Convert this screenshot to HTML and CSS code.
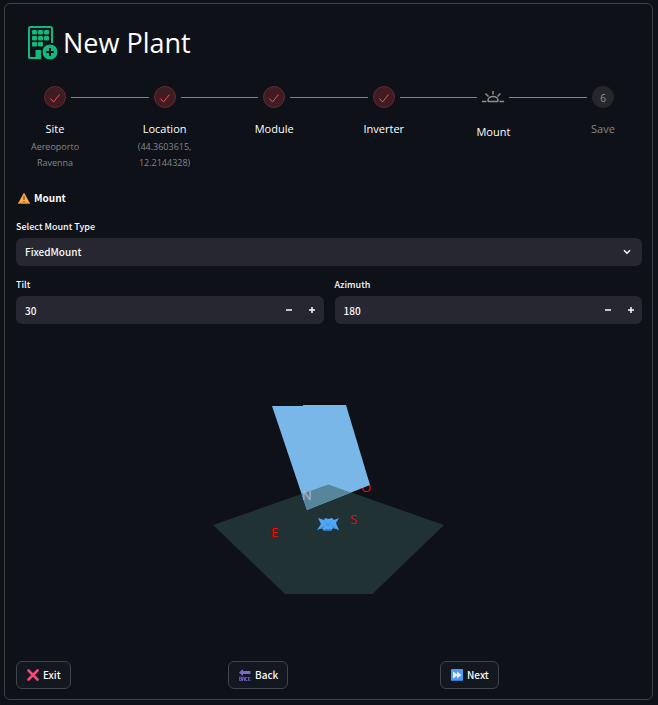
FILE: index.html
```html
<!DOCTYPE html>
<html lang="en">
<head>
<meta charset="utf-8">
<meta name="viewport" content="width=device-width, initial-scale=1">
<title>New Plant</title>
<link rel="stylesheet" href="styles.css">
</head>
<body>
<main class="card">
  <header class="heading">
    <svg class="heading-icon" viewBox="0 0 30 34" aria-hidden="true">
      <path d="M1 32V2.500Q1 1 2.500 1H22.500Q24 1 24 2.500V17M1 31Q1 32 2 32H12V25H8.500V32" fill="none" stroke="#10b981" stroke-width="2"/>
      <path d="M8 25h5v7H8z" fill="#10b981"/>
      <g fill="#10b981">
        <rect x="4" y="4" width="5" height="4.500" rx="1"/><rect x="10" y="4" width="5" height="4.500" rx="1"/><rect x="16" y="4" width="5" height="4.500" rx="1"/>
        <rect x="4" y="10" width="5" height="4.500" rx="1"/><rect x="10" y="10" width="5" height="4.500" rx="1"/><rect x="16" y="10" width="5" height="4.500" rx="1"/>
        <rect x="4" y="16" width="5" height="4.500" rx="1"/><rect x="10" y="16" width="5" height="4.500" rx="1"/>
      </g>
      <circle cx="22" cy="26" r="8" fill="#10b981" stroke="#0e1117"/>
      <path d="M18 26h8M22 22v8" stroke="#0e1117" stroke-width="2"/>
    </svg>
    <h1>New Plant</h1>
  </header>

  <ol class="steps">
    <li class="step done">
      <div class="step-body">
        <span class="marker"><svg viewBox="0 0 12 12" aria-hidden="true"><path d="M1.500 7.500 4.500 11 10.500 3.500"/></svg></span>
        <span class="step-title">Site</span>
        <span class="step-note">Aereoporto Ravenna</span>
      </div>
    </li>
    <li class="step done">
      <div class="step-body">
        <span class="marker"><svg viewBox="0 0 12 12" aria-hidden="true"><path d="M1.500 7.500 4.500 11 10.500 3.500"/></svg></span>
        <span class="step-title">Location</span>
        <span class="step-note">(44.3603615, 12.2144328)</span>
      </div>
    </li>
    <li class="step done">
      <div class="step-body">
        <span class="marker"><svg viewBox="0 0 12 12" aria-hidden="true"><path d="M1.500 7.500 4.500 11 10.500 3.500"/></svg></span>
        <span class="step-title">Module</span>
      </div>
    </li>
    <li class="step done">
      <div class="step-body">
        <span class="marker"><svg viewBox="0 0 12 12" aria-hidden="true"><path d="M1.500 7.500 4.500 11 10.500 3.500"/></svg></span>
        <span class="step-title">Inverter</span>
      </div>
    </li>
    <li class="step current" aria-current="step">
      <div class="step-body">
        <span class="marker"><svg viewBox="0 0 22 22" aria-hidden="true"><path d="M0 15.500H4.500M17.500 15.500H22M6 15.500H16M6 15.500V14.500A5 4 0 0 1 16 14.500V15.500M11 5V8.500M3.500 7.500 6.500 10.500M18.500 7.500 15.500 10.500"/></svg></span>
        <span class="step-title">Mount</span>
      </div>
    </li>
    <li class="step waiting">
      <div class="step-body">
        <span class="marker">6</span>
        <span class="step-title">Save</span>
      </div>
    </li>
  </ol>

  <h2 class="section-title">
    <svg class="warning" viewBox="0 0 12 12" aria-hidden="true"><path d="M6 .500 12 11.500H0z" fill="#fbab4b"/><path d="M0 11h12" stroke="#d98b3c"/><path d="M6 4v4M6 9v1" stroke="#4a3d35" stroke-width="1"/></svg>
    Mount
  </h2>

  <form class="form">
    <div class="field">
      <label for="mount-type">Select Mount Type</label>
      <div class="control">
        <select id="mount-type"><option>FixedMount</option></select>
        <svg class="chevron" viewBox="0 0 8 6" aria-hidden="true"><path d="M1 1.200 4 4.200 7 1.200"/></svg>
      </div>
    </div>
    <div class="pair">
      <div class="field">
        <label for="tilt">Tilt</label>
        <div class="control">
          <input id="tilt" type="text" inputmode="numeric" value="30">
          <button class="stepper" type="button" aria-label="Decrease tilt"><svg viewBox="0 0 6 6"><path d="M0 3h6"/></svg></button>
          <button class="stepper" type="button" aria-label="Increase tilt"><svg viewBox="0 0 6 6"><path d="M0 3h6M3 0v6"/></svg></button>
        </div>
      </div>
      <div class="field">
        <label for="azimuth">Azimuth</label>
        <div class="control">
          <input id="azimuth" type="text" inputmode="numeric" value="180">
          <button class="stepper" type="button" aria-label="Decrease azimuth"><svg viewBox="0 0 6 6"><path d="M0 3h6"/></svg></button>
          <button class="stepper" type="button" aria-label="Increase azimuth"><svg viewBox="0 0 6 6"><path d="M0 3h6M3 0v6"/></svg></button>
        </div>
      </div>
    </div>
  </form>

  <svg class="scene" viewBox="0 0 626 320" role="img" aria-label="Mount orientation">
    <path d="M197 195 312.500 154.500 428 195 356.500 264H269z" fill="#213235"/>
    <text class="compass" x="345" y="162">O</text>
    <path d="M256 76H287V75H330L354 155 291 180z" fill="#79b7e9"/>
    <path d="M285.500 164 312.500 154.500 334.500 162.500 291 180z" fill="#57869a"/>
    <text class="compass north" x="286" y="170">N</text>
    <text class="compass" x="255" y="207">E</text>
    <text class="compass" x="334" y="194">S</text>
    <path d="M302 188 308 190 309 188 312 189 316 188 318 190 323 188 320 193 323 200 317 198 315 201 312 199 308 201 306 198 301 200 305 194z" fill="#4fa8f7"/>
    <path d="M303 199 309 195 308 198zM322 199 315 195 317 198zM309 191l3 4 3-4-2 5h-2z" fill="#3f8fd2"/>
    <path d="M308 199h8l-2 2h-4z" fill="#42799f"/>
  </svg>

  <nav class="actions" aria-label="Steps">
    <button type="button"><svg viewBox="0 0 12 12" aria-hidden="true"><path d="M1.500 1.500 10.500 10.500M10.500 1.500 1.500 10.500" stroke="#f8487a" stroke-width="2.600" stroke-linecap="round"/></svg>Exit</button>
    <button type="button"><svg viewBox="0 0 12 12" aria-hidden="true"><path d="M0 3.500 4 0V2H11.500V5H4V7z" fill="#7c68c8"/><path d="M.500 8V11.500H2.500V8H.500M.500 9.700H2.500M3.500 12V8.500H5.500V12M3.500 10H5.500M8.500 8.500H6.500V11.500H8.500M9.500 8V12M11.500 8 9.500 10 11.500 12" fill="none" stroke="#6554a8"/></svg>Back</button>
    <button type="button"><svg viewBox="0 0 12 12" aria-hidden="true"><rect width="12" height="12" rx="1" fill="#4c9bf0"/><path d="M0 11h12v1H0z" fill="#3579c8"/><path d="M2 2.500 6 5.200V2.500L10.500 6 6 9.500V6.800L2 9.500z" fill="#f3efff"/></svg>Next</button>
  </nav>
</main>
</body>
</html>
```
FILE: styles.css
```css
* {
  box-sizing: border-box;
}

body {
  margin: 0;
  padding: 3px 5px 5px 4px;
  background: #0e1117;
  color: #fafafa;
  font: 10px/16px "Noto Sans CJK JP", "Noto Sans", sans-serif;
}

.card {
  border: 1px solid #3d3f45;
  border-radius: 6px;
  padding: 20px 10px 10px 11px;
}

.heading {
  display: flex;
  align-items: center;
  gap: 5px;
  height: 38px;
  padding-left: 12px;
}

.heading-icon {
  width: 30px;
  height: 34px;
}

h1 {
  margin: 0;
  color: #fff;
  font: 400 27px/38px "Open Sans", "Noto Sans", sans-serif;
}

.steps {
  display: grid;
  grid-template-columns: repeat(5, minmax(0, 1fr)) 78px;
  min-height: 88px;
  margin: 24px 0 0;
  padding: 0;
  list-style: none;
  font-family: "Open Sans", "Noto Sans", sans-serif;
}

.step {
  position: relative;
}

.step:not(:last-child)::after {
  content: "";
  position: absolute;
  top: 11px;
  left: 55px;
  width: calc(100% - 32px);
  height: 1px;
  background: #84858a;
}

.step.done::after {
  background: #ff4b4b;
}

.step-body {
  display: flex;
  flex-direction: column;
  align-items: center;
  width: 78px;
  text-align: center;
}

.marker {
  display: grid;
  place-items: center;
  width: 22px;
  height: 22px;
  border-radius: 50%;
}

.done .marker {
  border: 1px solid #642a30;
  background: #3e1c22;
}

.marker svg {
  width: 12px;
  height: 12px;
  fill: none;
  stroke: #ff4b4b;
}

.current .marker {
  height: 25px;
  align-items: start;
}

.current .marker svg {
  width: 22px;
  height: 22px;
  stroke: #8e8f93;
  stroke-width: 1.5;
}

.waiting .marker {
  padding-top: 2px;
  background: #26272c;
  color: #8e8f93;
}

.step-title {
  margin-top: 13px;
  color: #fff;
  font-size: 11px;
  line-height: 16px;
}

.waiting .step-title {
  color: #85868a;
}

.step-note {
  margin-top: 2px;
  color: #85868a;
  font-size: 9px;
  line-height: 16px;
}

.section-title {
  display: flex;
  align-items: center;
  gap: 4px;
  margin: 16px 0 0;
  padding-left: 2px;
  font-size: 10px;
  line-height: 16px;
}

.warning {
  width: 12px;
  height: 12px;
}

.form {
  display: grid;
  gap: 12px;
  margin-top: 14px;
}

.pair {
  display: grid;
  grid-template-columns: 1fr 1fr;
  gap: 11px;
}

.field label {
  display: block;
  height: 18px;
  font-size: 9px;
  font-weight: 500;
  line-height: 14px;
}

.control {
  position: relative;
  display: flex;
  align-items: center;
  height: 28px;
  border-radius: 6px;
  background: #262730;
}

.control select,
.control input {
  flex: 1;
  min-width: 0;
  height: 28px;
  border: 0;
  padding: 0 9px;
  background: transparent;
  color: inherit;
  font: inherit;
  font-weight: 500;
  appearance: none;
}

.chevron {
  position: absolute;
  right: 11px;
  width: 8px;
  height: 6px;
  fill: none;
  stroke: #fafafa;
  stroke-width: 1.5;
  pointer-events: none;
}

.stepper {
  display: grid;
  place-items: center;
  width: 23px;
  height: 28px;
  border: 0;
  padding: 0;
  background: transparent;
}

.stepper svg {
  width: 6px;
  height: 6px;
  stroke: #fafafa;
  stroke-width: 1.5;
}

.scene {
  display: block;
  width: 100%;
  margin-top: 6px;
}

.compass {
  fill: #ff0000;
  font: 13px "Open Sans", sans-serif;
}

.north {
  fill: #a9bde6;
}

.actions {
  display: grid;
  grid-template-columns: repeat(3, 1fr);
  justify-items: start;
  gap: 10px;
  margin-top: 11px;
}

.actions button {
  display: flex;
  align-items: center;
  gap: 4px;
  height: 28px;
  border: 1px solid #41444c;
  border-radius: 6px;
  padding: 0 9px 0 10px;
  background: #131720;
  color: inherit;
  font: inherit;
  font-weight: 500;
}

.actions svg {
  width: 12px;
  height: 12px;
}
```
